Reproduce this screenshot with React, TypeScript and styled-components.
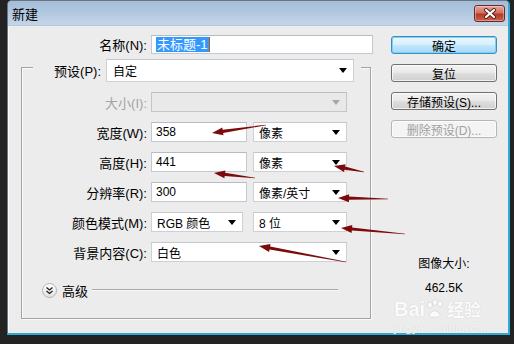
import React from "react";
import styled, { createGlobalStyle } from "styled-components";

const GlobalStyle = createGlobalStyle`
  html, body { margin: 0; padding: 0; background: #232323; }
  body {
    width: 514px; height: 344px; overflow: hidden;
    font-family: "Liberation Sans", "Noto Sans CJK SC", sans-serif;
    font-size: 12px; color: #000;
  }
  * { box-sizing: border-box; }
`;

const Page = styled.div`
  position: relative;
  width: 514px;
  height: 344px;
  padding: 0 4px 9px 7px;
  display: flex;
`;

const Window = styled.div`
  flex: 1;
  display: flex;
  flex-direction: column;
  border: 1px solid #6b7580;
  border-right: 2px solid #2fa9d6;
  border-bottom: 2px solid #2fa9d6;
  border-radius: 5px 5px 0 0;
  overflow: hidden;
  background: #ececec;
  box-shadow: inset 1px 0 0 #f8f8f8;
`;

const TitleBar = styled.div`
  height: 25px;
  flex: none;
  display: flex;
  justify-content: space-between;
  padding: 0 3px 0 4px;
  background: linear-gradient(#a3bcd8, #c3d5e9);
  border-bottom: 1px solid #b8c8da;
`;

const TitleText = styled.div`
  align-self: center;
  font-size: 13px;
  font-family: "Noto Sans CJK SC", sans-serif;
  color: #000;
`;

const CloseButton = styled.div`
  margin-top: 4px;
  width: 31px;
  height: 17px;
  border: 1px solid #6a2a22;
  border-radius: 3px;
  background: linear-gradient(#e3a99d 0%, #d0705f 45%, #b53a27 55%, #c9634d 100%);
  display: flex;
  align-items: center;
  justify-content: center;
  box-shadow: inset 0 0 0 1px rgba(255, 255, 255, 0.35);
`;

const Content = styled.div`
  flex: 1;
  display: flex;
  padding: 9px 0 0 13px;
  position: relative;
`;

const LeftCol = styled.div`
  width: 350px;
  display: flex;
  flex-direction: column;
`;

const NameRow = styled.div`
  display: flex;
  align-items: center;
  height: 19px;
  gap: 4px;
`;

const Label = styled.div<{ $w: number; $disabled?: boolean }>`
  width: ${(p) => p.$w}px;
  flex: none;
  text-align: right;
  white-space: nowrap;
  color: ${(p) => (p.$disabled ? "#a3a3a3" : "#000")};
  font-size: 13px;
`;

const TextBox = styled.div<{ $w: number; $h?: number }>`
  width: ${(p) => p.$w}px;
  height: ${(p) => p.$h ?? 20}px;
  flex: none;
  background: #fff;
  border: 1px solid #c3c9d1;
  border-top-color: #b5bcc6;
  display: flex;
  align-items: center;
  padding-left: 4px;
  white-space: nowrap;
`;

const Selected = styled.span`
  background: #3399ff;
  color: #fff;
  padding: 0 1px;
  line-height: 15px;
  font-size: 13px;
`;

const Caret = styled.span`
  display: inline-block;
  width: 1px;
  height: 15px;
  background: #b06010;
`;

const GroupBox = styled.div`
  margin-top: 13px;
  width: 350px;
  border: 1px solid #a3a3a3;
  box-shadow: inset 1px 1px 0 #fafafa, 1px 1px 0 #fafafa;
  display: flex;
  flex-direction: column;
  padding-bottom: 20px;
`;

const PresetRow = styled.div`
  margin: -9px 9px 0 11px;
  background: #ececec;
  display: flex;
  align-items: center;
  gap: 5px;
  height: 23px;
`;

const Select = styled.div<{ $w: number; $h?: number; $disabled?: boolean; $pl?: number }>`
  width: ${(p) => p.$w}px;
  height: ${(p) => p.$h ?? 20}px;
  flex: none;
  background: ${(p) => (p.$disabled ? "#e9e9e9" : "#fff")};
  border: 1px solid ${(p) => (p.$disabled ? "#c6c6c6" : "#cdd1d7")};
  border-top-color: ${(p) => (p.$disabled ? "#bdbdbd" : "#c4c8ce")};
  display: flex;
  align-items: center;
  justify-content: space-between;
  padding: 0 6px 0 ${(p) => p.$pl ?? 5}px;
  white-space: nowrap;
`;

const Triangle = styled.span<{ $disabled?: boolean }>`
  width: 0;
  height: 0;
  border-left: 4px solid transparent;
  border-right: 4px solid transparent;
  border-top: 5px solid ${(p) => (p.$disabled ? "#a8a8a8" : "#000")};
`;

const FieldRow = styled.div<{ $mt: number }>`
  margin-top: ${(p) => p.$mt}px;
  display: flex;
  align-items: center;
  gap: 4px;
  height: 20px;
`;

const Fields = styled.div`
  width: 196px;
  display: flex;
  justify-content: space-between;
`;

const AdvancedRow = styled.div`
  margin: 20px 32px 0 20px;
  height: 16px;
  display: flex;
  align-items: center;
`;

const RoundIcon = styled.div`
  width: 15px;
  height: 15px;
  border-radius: 50%;
  border: 1px solid #b3b3b3;
  background: linear-gradient(#ffffff, #e2e2e2);
  display: flex;
  align-items: center;
  justify-content: center;
  flex: none;
`;

const AdvancedText = styled.div`
  margin-left: 5px;
  font-size: 13px;
`;

const Rule = styled.div`
  flex: 1;
  height: 2px;
  margin-left: 4px;
  border-top: 1px solid #a8a8a8;
  border-bottom: 1px solid #fafafa;
`;

const RightCol = styled.div`
  margin-left: 20px;
  width: 106px;
  padding-top: 1px;
  display: flex;
  flex-direction: column;
  gap: 10px;
`;

const Button = styled.div<{ $default?: boolean; $disabled?: boolean }>`
  height: 18px;
  border-radius: 3px;
  display: flex;
  align-items: center;
  justify-content: center;
  font-size: 12px;
  white-space: nowrap;
  color: ${(p) => (p.$disabled ? "#a0a0a0" : "#000")};
  border: 1px solid
    ${(p) => (p.$default ? "#3a8cc4" : p.$disabled ? "#b4b7ba" : "#707070")};
  background: ${(p) =>
    p.$default
      ? "linear-gradient(#eaf6fd 0%, #d9f0fc 45%, #bee6fd 55%, #a7d9f5 100%)"
      : p.$disabled
      ? "#f4f4f4"
      : "linear-gradient(#f2f2f2 0%, #ebebeb 45%, #dddddd 55%, #cfcfcf 100%)"};
  box-shadow: ${(p) =>
    p.$default ? "inset 0 0 0 1px #7fd0f5" : "inset 0 0 0 1px rgba(255,255,255,0.7)"};
`;

const Info = styled.div`
  margin-top: 109px;
  display: flex;
  flex-direction: column;
  align-items: center;
  gap: 10px;
  line-height: 14px;
`;

const Overlay = styled.svg`
  position: absolute;
  left: 0;
  top: 0;
  pointer-events: none;
`;

const Watermark = styled.div`
  position: absolute;
  left: 394px;
  top: 299px;
  color: #fbfbfb;
  text-shadow: 0 0 1px #c2c2c2;
  display: flex;
  flex-direction: column;
`;

const WmTop = styled.div`
  display: flex;
  align-items: center;
  font-family: "Liberation Sans", sans-serif;
  font-weight: bold;
  font-size: 20px;
  line-height: 20px;
`;

const WmCn = styled.span`
  font-family: "Noto Sans CJK SC", sans-serif;
  font-size: 17px;
  font-weight: bold;
`;

const WmUrl = styled.div`
  font-size: 11px;
  line-height: 12px;
  margin-top: 3px;
  letter-spacing: 0.2px;
`;

type Pt = [number, number];
const arrows: [Pt, Pt][] = [
  [[266, 125], [212, 133]],
  [[255, 178], [214, 173]],
  [[364, 172], [334, 166]],
  [[388, 199], [338, 198]],
  [[405, 234], [341, 228]],
  [[346, 262], [259, 246]],
];

function arrowPoints(tail: Pt, head: Pt): string {
  const dx = head[0] - tail[0];
  const dy = head[1] - tail[1];
  const len = Math.hypot(dx, dy);
  const ux = dx / len;
  const uy = dy / len;
  const nx = -uy;
  const ny = ux;
  const headLen = 11;
  const bx = head[0] - ux * headLen;
  const by = head[1] - uy * headLen;
  const p = (x: number, y: number) => `${x.toFixed(1)},${y.toFixed(1)}`;
  return [
    p(tail[0] + nx * 0.3, tail[1] + ny * 0.3),
    p(bx + nx * 1.6, by + ny * 1.6),
    p(bx + nx * 4, by + ny * 4),
    p(head[0], head[1]),
    p(bx - nx * 4, by - ny * 4),
    p(bx - nx * 1.6, by - ny * 1.6),
    p(tail[0] - nx * 0.3, tail[1] - ny * 0.3),
  ].join(" ");
}

export default function App() {
  return (
    <>
      <GlobalStyle />
      <Page>
        <Window>
          <TitleBar>
            <TitleText>新建</TitleText>
            <CloseButton>
              <svg width="14" height="11" viewBox="0 0 14 11">
                <path d="M3 2 L11 9 M11 2 L3 9" stroke="#5a2018" strokeWidth="4" strokeLinecap="round" />
                <path d="M3 2 L11 9 M11 2 L3 9" stroke="#ffffff" strokeWidth="2.2" strokeLinecap="round" />
              </svg>
            </CloseButton>
          </TitleBar>
          <Content>
            <LeftCol>
              <NameRow>
                <Label $w={126}>名称(N):</Label>
                <TextBox $w={222} $h={19}>
                  <Selected>未标题-1</Selected>
                  <Caret />
                </TextBox>
              </NameRow>
              <GroupBox>
                <PresetRow>
                  <Label $w={68}>预设(P):</Label>
                  <Select $w={248} $h={23} $pl={6}>
                    <span>自定</span>
                    <Triangle />
                  </Select>
                </PresetRow>
                <FieldRow $mt={10}>
                  <Label $w={125} $disabled>大小(I):</Label>
                  <Select $w={196} $disabled>
                    <span />
                    <Triangle $disabled />
                  </Select>
                </FieldRow>
                <FieldRow $mt={10}>
                  <Label $w={125}>宽度(W):</Label>
                  <Fields>
                    <TextBox $w={96}>358</TextBox>
                    <Select $w={94}>
                      <span>像素</span>
                      <Triangle />
                    </Select>
                  </Fields>
                </FieldRow>
                <FieldRow $mt={10}>
                  <Label $w={125}>高度(H):</Label>
                  <Fields>
                    <TextBox $w={96}>441</TextBox>
                    <Select $w={94}>
                      <span>像素</span>
                      <Triangle />
                    </Select>
                  </Fields>
                </FieldRow>
                <FieldRow $mt={10}>
                  <Label $w={125}>分辨率(R):</Label>
                  <Fields>
                    <TextBox $w={96}>300</TextBox>
                    <Select $w={94}>
                      <span>像素/英寸</span>
                      <Triangle />
                    </Select>
                  </Fields>
                </FieldRow>
                <FieldRow $mt={10}>
                  <Label $w={125}>颜色模式(M):</Label>
                  <Fields>
                    <Select $w={92}>
                      <span>RGB 颜色</span>
                      <Triangle />
                    </Select>
                    <Select $w={94}>
                      <span>8 位</span>
                      <Triangle />
                    </Select>
                  </Fields>
                </FieldRow>
                <FieldRow $mt={10}>
                  <Label $w={125}>背景内容(C):</Label>
                  <Select $w={196}>
                    <span>白色</span>
                    <Triangle />
                  </Select>
                </FieldRow>
                <AdvancedRow>
                  <RoundIcon>
                    <svg width="9" height="9" viewBox="0 0 9 9">
                      <path d="M1.5 1.5 L4.5 4 L7.5 1.5 M1.5 5 L4.5 7.5 L7.5 5" stroke="#222" strokeWidth="1.3" fill="none" />
                    </svg>
                  </RoundIcon>
                  <AdvancedText>高级</AdvancedText>
                  <Rule />
                </AdvancedRow>
              </GroupBox>
            </LeftCol>
            <RightCol>
              <Button $default>确定</Button>
              <Button>复位</Button>
              <Button>存储预设(S)...</Button>
              <Button $disabled>删除预设(D)...</Button>
              <Info>
                <div>图像大小:</div>
                <div>462.5K</div>
              </Info>
            </RightCol>
          </Content>
        </Window>
        <Watermark>
          <WmTop>
            <span>Bai</span>
            <svg width="22" height="20" viewBox="0 0 22 20">
              <ellipse cx="5" cy="6" rx="2.4" ry="3" fill="#fbfbfb" stroke="#cccccc" strokeWidth="0.6" />
              <ellipse cx="10" cy="3.5" rx="2.4" ry="3" fill="#fbfbfb" stroke="#cccccc" strokeWidth="0.6" />
              <ellipse cx="15" cy="5" rx="2.4" ry="3" fill="#fbfbfb" stroke="#cccccc" strokeWidth="0.6" />
              <path d="M4 16 Q9 8 15 15 Q15 19 10 18 Q4 19 4 16 Z" fill="#fbfbfb" stroke="#cccccc" strokeWidth="0.6" />
            </svg>
            <WmCn>经验</WmCn>
          </WmTop>
          <WmUrl>jingyan.baidu.com</WmUrl>
        </Watermark>
        <Overlay width="514" height="344" viewBox="0 0 514 344">
          {arrows.map(([t, h], i) => (
            <polygon key={i} points={arrowPoints(t, h)} fill="#7c0a0a" />
          ))}
        </Overlay>
      </Page>
    </>
  );
}
